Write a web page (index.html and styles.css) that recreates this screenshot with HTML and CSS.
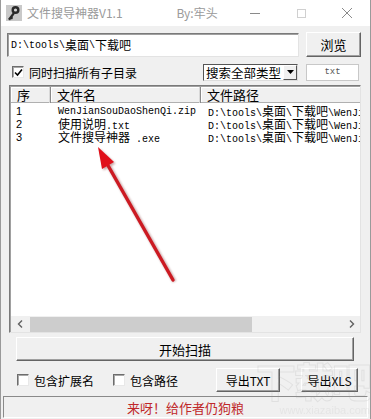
FILE: index.html
```html
<!DOCTYPE html>
<html lang="zh">
<head>
<meta charset="utf-8">
<title>文件搜导神器V1.1</title>
<link rel="stylesheet" href="styles.css">
</head>
<body>
<div class="win">
  <div class="titlebar">
    <svg class="appicon" width="16" height="16" viewBox="0 0 16 16">
      <rect x="0" y="0" width="16" height="16" fill="#c9c9c9"/>
      <circle cx="9.5" cy="5" r="4" fill="#2a2a2a"/>
      <circle cx="9.5" cy="5" r="1.6" fill="#d8d8d8"/>
      <path d="M7 7.5 L2 14 L4 15.5 L5 14 L6 14.5 L7 13 L6.5 12 L9 8.5 Z" fill="#2a2a2a"/>
    </svg>
    <span class="title">文件搜导神器V1.1</span>
    <span class="author">By:牢头</span>
    <span class="ctl"><svg width="12" height="12" viewBox="0 0 12 12"><path d="M1 6.5 H11" stroke="#8a8a8a" stroke-width="1"/></svg></span>
    <span class="ctl"><svg width="12" height="12" viewBox="0 0 12 12"><rect x="2.5" y="2.5" width="8" height="8" fill="none" stroke="#d0d0d0"/></svg></span>
    <span class="ctl"><svg width="12" height="12" viewBox="0 0 12 12"><path d="M1 1 L11 11 M11 1 L1 11" stroke="#8a8a8a" stroke-width="1"/></svg></span>
  </div>

  <div class="row r1">
    <div class="edit path mono">D:\tools\<span class="cj">桌面</span>\<span class="cj">下载吧</span></div>
    <div class="btn browse">浏览</div>
  </div>

  <div class="row r2">
    <label class="chk"><span class="box checked"><svg width="9" height="9" viewBox="0 0 9 9"><path d="M1 4.5 L3.5 7 L8 1.5" fill="none" stroke="#000" stroke-width="1.6"/></svg></span><span>同时扫描所有子目录</span></label>
    <div class="combo"><span class="combo-text">搜索全部类型</span><span class="combo-btn"><svg width="7" height="4" viewBox="0 0 7 4"><path d="M0 0 H7 L3.5 4 Z" fill="#000"/></svg></span></div>
    <div class="edit ext mono">txt</div>
  </div>

  <div class="list">
    <div class="lhead">
      <div class="hc c1">序</div>
      <div class="hc c2">文件名</div>
      <div class="hc c3">文件路径</div>
    </div>
    <div class="lbody mono">
      <div class="lrow"><div class="c1">1</div><div class="c2">WenJianSouDaoShenQi.zip</div><div class="c3">D:\tools\<span class="cj">桌面</span>\<span class="cj">下载吧</span>\WenJi</div></div>
      <div class="lrow"><div class="c1">2</div><div class="c2"><span class="cj">使用说明</span>.txt</div><div class="c3">D:\tools\<span class="cj">桌面</span>\<span class="cj">下载吧</span>\WenJi</div></div>
      <div class="lrow"><div class="c1">3</div><div class="c2"><span class="cj">文件搜导神器</span> .exe</div><div class="c3">D:\tools\<span class="cj">桌面</span>\<span class="cj">下载吧</span>\WenJi</div></div>
    </div>
    <div class="hscroll">
      <span class="arr"><svg width="6" height="8" viewBox="0 0 6 8"><path d="M5 0.5 L1.5 4 L5 7.5" fill="none" stroke="#606060" stroke-width="1.4"/></svg></span>
      <span class="track"><span class="thumb"></span></span>
      <span class="arr"><svg width="6" height="8" viewBox="0 0 6 8"><path d="M1 0.5 L4.5 4 L1 7.5" fill="none" stroke="#606060" stroke-width="1.4"/></svg></span>
    </div>
  </div>

  <div class="btn start">开始扫描</div>

  <div class="row r4">
    <label class="chk c-ext"><span class="box"></span><span>包含扩展名</span></label>
    <label class="chk c-path"><span class="box"></span><span>包含路径</span></label>
    <div class="btn exp txt">导出TXT</div>
    <div class="btn exp xls">导出XLS</div>
  </div>

  <div class="status">来呀！给作者仍狗粮</div>

  <div class="watermark"><span class="wm-big">下载吧</span><span class="wm-url">www.xiazaiba.com</span></div>

  <svg class="arrow" width="371" height="419" viewBox="0 0 371 419">
    <defs>
      <filter id="sh" x="-20%" y="-20%" width="140%" height="140%">
        <feGaussianBlur stdDeviation="1.2"/>
      </filter>
    </defs>
    <g opacity="0.35" filter="url(#sh)" transform="translate(1.5,1.5)">
      <path d="M172 280 L105 162" stroke="#600" stroke-width="4"/>
      <path d="M97 147 L113 162 L101 169 Z" fill="#600"/>
    </g>
    <path d="M172 280 L105 162" stroke="#cc1a22" stroke-width="3.4" stroke-linecap="round"/>
    <path d="M97 147 L113 162 L101 169 Z" fill="#e0101a"/>
  </svg>
</div>
</body>
</html>
```

FILE: styles.css
```css
* { box-sizing: border-box; }
html, body { margin: 0; padding: 0; }
body {
  width: 371px;
  height: 419px;
  overflow: hidden;
  font-family: "Noto Sans CJK SC", "Liberation Sans", sans-serif;
  font-size: 12px;
  color: #000;
  background: #f0f0f0;
}
.win {
  position: relative;
  width: 371px;
  height: 419px;
  background: #f0f0f0;
  border-left: 1px solid #9a9a9a;
  border-right: 1px solid #9a9a9a;
  overflow: hidden;
}
.titlebar {
  height: 26px;
  background: #fff;
  display: flex;
  align-items: center;
  padding-left: 5px;
}
.appicon { flex: none; }
.title {
  margin-left: 5px;
  color: #9a9a9a;
  font-size: 12px;
  width: 152px;
  line-height: 16px;
}
.author {
  color: #9a9a9a;
  font-size: 12px;
  width: 56px;
  line-height: 16px;
}
.ctl {
  width: 47px;
  display: flex;
  justify-content: center;
  align-items: center;
}
.mono {
  font-family: "Liberation Mono", "Noto Sans CJK SC", monospace;
  font-size: 10px;
}
.cj {
  font-family: "Noto Sans CJK SC", sans-serif;
  font-size: 12px;
  line-height: 12px;
}
.row { display: flex; }
.r1 { padding-left: 6px; align-items: flex-start; }
.edit {
  background: #fff;
  border: 1px solid;
  border-color: #7a7a7a #e3e3e3 #e3e3e3 #7a7a7a;
  box-shadow: inset 1px 1px 0 #a0a0a0;
  display: flex;
  align-items: center;
  white-space: nowrap;
}
.path {
  margin-top: 7px;
  width: 292px;
  height: 24px;
  padding-left: 3px;
}
.btn {
  background: #f0f0f0;
  border: 1px solid;
  border-color: #fff #646464 #646464 #fff;
  box-shadow: inset -1px -1px 0 #a0a0a0;
  display: flex;
  align-items: center;
  justify-content: center;
  font-size: 12px;
}
.browse {
  margin-left: 7px;
  margin-top: 6px;
  width: 55px;
  height: 25px;
  font-size: 13px;
}
.r2 {
  margin-top: 7px;
  height: 16px;
  align-items: center;
  padding-left: 11px;
}
.chk {
  display: flex;
  align-items: center;
  font-size: 12px;
}
.box {
  width: 12px;
  height: 12px;
  background: #fff;
  border: 1px solid;
  border-color: #6d6d6d #e8e8e8 #e8e8e8 #6d6d6d;
  box-shadow: inset 1px 1px 0 #a8a8a8;
  display: flex;
  align-items: center;
  justify-content: center;
  margin-right: 5px;
  flex: none;
}
.r2 .chk { width: 191px; }
.combo {
  width: 95px;
  height: 17px;
  background: #fff;
  border: 1px solid;
  border-color: #555 #ddd #ddd #555;
  display: flex;
  align-items: center;
}
.combo-text {
  flex: 1;
  padding-left: 2px;
  font-size: 12.5px;
  line-height: 15px;
}
.combo-btn {
  width: 14px;
  height: 15px;
  background: #f0f0f0;
  border: 1px solid;
  border-color: #fff #555 #555 #fff;
  display: flex;
  align-items: center;
  justify-content: center;
}
.ext {
  margin-left: 8px;
  width: 53px;
  height: 17px;
  justify-content: center;
  color: #555;
  font-size: 9px;
  border-color: #c8c8c8;
  box-shadow: none;
}
.list {
  margin-top: 5px;
  margin-left: 8px;
  width: 352px;
  height: 248px;
  background: #fff;
  border: 1px solid;
  border-color: #7a7a7a #e3e3e3 #e3e3e3 #7a7a7a;
  box-shadow: inset 1px 1px 0 #a0a0a0;
  display: flex;
  flex-direction: column;
  overflow: hidden;
  padding: 1px 0 0 1px;
}
.lhead {
  display: flex;
  height: 16px;
  flex: none;
  background: #f0f0f0;
}
.hc {
  border-right: 1px solid #8a8a8a;
  box-shadow: inset -1px 0 0 #d8d8d8, inset 0 -1px 0 #b0b0b0, inset 1px 1px 0 #fff;
  padding-left: 6px;
  font-size: 13px;
  line-height: 15px;
  white-space: nowrap;
}
.c1 { width: 40px; flex: none; }
.c2 { width: 150px; flex: none; }
.c3 { width: 200px; flex: none; }
.lbody {
  flex: 1;
  padding-top: 2px;
}
.lrow {
  display: flex;
  height: 13px;
  line-height: 13px;
  white-space: nowrap;
}
.lrow .c1 { padding-left: 5px; }
.lrow .c2 { padding-left: 7px; }
.lrow .c3 { padding-left: 7px; }
.lrow .c1 { font-family: "Liberation Sans", sans-serif; font-size: 11px; }
.hscroll {
  height: 16px;
  flex: none;
  display: flex;
  align-items: center;
  background: #f0f0f0;
}
.arr {
  width: 17px;
  height: 16px;
  display: flex;
  align-items: center;
  justify-content: center;
}
.track {
  flex: 1;
  height: 16px;
  display: flex;
  align-items: center;
}
.thumb {
  width: 222px;
  height: 15px;
  margin-left: 2px;
  background: #cdcdcd;
}
.start {
  margin-top: 4px;
  margin-left: 15px;
  width: 338px;
  height: 24px;
  font-size: 13px;
}
.r4 {
  margin-top: 7px;
  height: 24px;
  align-items: center;
}
.c-ext { margin-left: 16px; width: 96px; }
.c-path { width: 103px; }
.exp {
  height: 24px;
  font-size: 12px;
}
.txt { width: 64px; }
.xls { width: 57px; margin-left: 21px; }
.status {
  margin-top: 4px;
  margin-left: 2px;
  width: 365px;
  height: 22px;
  border: 1px solid;
  border-color: #8a8a8a #fff #fff #8a8a8a;
  color: #c0282a;
  font-size: 13px;
  display: flex;
  align-items: center;
  justify-content: center;
}
.watermark {
  position: absolute;
  right: 0;
  bottom: 0;
  width: 140px;
  height: 62px;
  pointer-events: none;
  display: flex;
  flex-direction: column;
  align-items: flex-end;
  color: transparent;
  opacity: 0.5;
}
.wm-big {
  font-size: 40px;
  font-weight: 900;
  line-height: 46px;
  letter-spacing: -2px;
  -webkit-text-stroke: 1px rgba(150, 150, 150, 0.35);
}
.wm-url {
  font-family: "Liberation Sans", sans-serif;
  font-size: 11px;
  line-height: 14px;
  color: rgba(150, 150, 150, 0.25);
}
.arrow {
  position: absolute;
  left: 0;
  top: 0;
  pointer-events: none;
}
```
